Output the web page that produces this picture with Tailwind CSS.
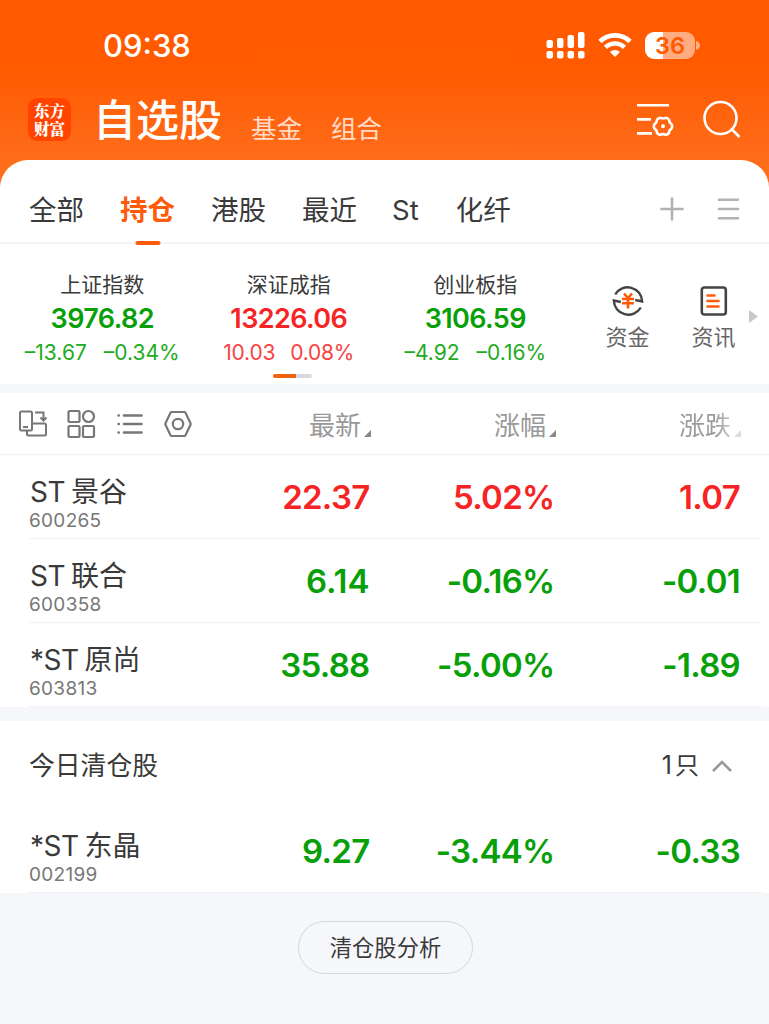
<!DOCTYPE html>
<html lang="zh-CN">

<head>
  <meta charset="utf-8">
  <title>自选股</title>
  <script src="https://cdn.jsdelivr.net/npm/@tailwindcss/browser@4"></script>
</head>

<body class="w-[769px] h-[1024px] overflow-hidden bg-[#f6f7fa] font-['Inter','Noto_Sans_CJK_SC',sans-serif] text-[#3a3a3a]">
  <div class="bg-linear-to-b from-[#ff5a00] from-35% to-[#ff6e1a] to-90% h-[190px]">
    <!-- status bar -->
    <div class="h-[90px] flex items-center justify-between pl-[103px] pr-[69px] text-white">
      <span class="text-[31px] font-medium leading-none">09:38</span>
      <div class="flex items-center">
        <svg class="w-[40px] h-[28px]" viewBox="0 0 40 28" fill="white">
          <rect x="0.5" y="9" width="6.5" height="8" rx="2" />
          <rect x="11" y="7" width="6.5" height="10" rx="2" />
          <rect x="21.500" y="4" width="6.5" height="13" rx="2" />
          <rect x="32" y="1" width="6.5" height="16" rx="2" />
          <rect x="0.5" y="20" width="6.5" height="7.500" rx="2" />
          <rect x="11" y="20" width="6.5" height="7.500" rx="2" />
          <rect x="21.500" y="20" width="6.5" height="7.500" rx="2" />
          <rect x="32" y="20" width="6.5" height="7.500" rx="2" />
        </svg>
        <svg class="w-[34px] h-[24px] ml-[12px]" viewBox="0 0 34 24" fill="none" stroke="white" stroke-width="4.600">
          <path d="M2 8.500a21.500 21.500 0 0 1 30 0" />
          <path d="M7.500 14.300a13.600 13.600 0 0 1 19 0" />
          <path d="M17 24l-5-5a7.200 7.200 0 0 1 10 0z" fill="white" stroke="none" />
        </svg>
        <div class="ml-[13px] w-[50px] h-[27px] rounded-[9px] flex items-center justify-center bg-linear-to-r from-white from-36% to-[#ffac80] to-36% text-[#ff5a00] text-[23.500px] font-semibold leading-none pt-px">36</div>
        <svg class="w-[4px] h-[9px] ml-[1px]" viewBox="0 0 4 9"><path d="M0 0q4 1 4 4.500T0 9z" fill="#ffac80" /></svg>
      </div>
    </div>
    <!-- title bar -->
    <div class="h-[70px] flex pl-[28px] pr-[28px] text-white">
      <div class="mt-[8px] w-[43px] h-[43px] rounded-[9px] bg-[#ff4400] font-['Noto_Serif_CJK_SC','Noto_Sans_CJK_SC',serif] font-black text-[15.500px] leading-[18px] text-center pt-[3px]">东方<br>财富</div>
      <h1 class="ml-[22px] mt-[2px] text-[43px] leading-[56px] font-medium">自选股</h1>
      <span class="ml-[29px] mt-[21px] text-[25.500px] leading-[36px] text-[#ffdcc9]">基金</span>
      <span class="ml-[29px] mt-[21px] text-[25.500px] leading-[36px] text-[#ffdcc9]">组合</span>
      <svg class="ml-auto mt-[12px] w-[38px] h-[34px]" viewBox="0 0 38 34" fill="none" stroke="white" stroke-width="2.600">
        <path d="M1 3.300h32M1 17.400h14M1 31.400h15" />
        <path transform="translate(27 24.300)" d="M8.600-2Q9.800 0 8.600 2Q6.200 3.600 6.030 6.450Q4.900 8.490 2.570 8.450Q0 7.200-2.570 8.450Q-4.900 8.490-6.030 6.450Q-6.200 3.600-8.600 2Q-9.800 0-8.600-2Q-6.200-3.600-6.030-6.450Q-4.900-8.490-2.570-8.450Q0-7.200 2.570-8.450Q4.900-8.490 6.030-6.450Q6.200-3.600 8.600-2Z" />
        <circle cx="27" cy="24.300" r="2" fill="white" stroke="none" />
      </svg>
      <svg class="ml-[29px] mt-[10px] w-[38px] h-[38px]" viewBox="0 0 38 38" fill="none" stroke="white" stroke-width="2.600">
        <circle cx="17.500" cy="18" r="16" />
        <path d="M28.500 29l8 8" />
      </svg>
    </div>
  </div>

  <div class="relative -mt-[30px] bg-white rounded-t-[28px]">
    <!-- group tabs -->
    <nav class="h-[84px] border-b-2 border-[#f4f4f5] flex text-[27.500px] leading-[40px] pt-[30px] pl-[29px] pr-[29px]">
      <a>全部</a>
      <a class="ml-[36px] font-bold text-[#ff5a0a] relative">持仓
        <span class="absolute left-1/2 -translate-x-1/2 top-[51px] w-[25px] h-[4px] rounded-full bg-[#ff5a0a]"></span>
      </a>
      <a class="ml-[36px]">港股</a>
      <a class="ml-[36px]">最近</a>
      <a class="ml-[35px]">St</a>
      <a class="ml-[37px]">化纤</a>
      <svg class="ml-auto mt-[7px] w-[24px] h-[24px]" viewBox="0 0 24 24" stroke="#b2b2b2" stroke-width="2.600" stroke-linecap="round">
        <path d="M12 1.500v21M1.500 12h21" />
      </svg>
      <svg class="ml-[33px] mt-[7px] w-[23px] h-[24px]" viewBox="0 0 23 24" stroke="#b2b2b2" stroke-width="2.600" stroke-linecap="round">
        <path d="M2 2.700h19M2 12h19M2 21.300h19" />
      </svg>
    </nav>

    <!-- market indices -->
    <div class="relative h-[140px] flex pl-[9px] text-center">
      <div class="w-[186.500px] pt-[27px]">
        <p class="text-[21px] leading-[28px]">上证指数</p>
        <p class="text-[27px] leading-[40px] font-semibold text-[#08a008] tracking-[-0.600px]">3976.82</p>
        <p class="text-[21px] leading-[28px] text-[#22ab22]"><span>–13.67</span><span class="ml-[17px]">–0.34%</span></p>
      </div>
      <div class="w-[186.500px] pt-[27px]">
        <p class="text-[21px] leading-[28px]">深证成指</p>
        <p class="text-[27px] leading-[40px] font-semibold text-[#f62424] tracking-[-0.600px]">13226.06</p>
        <p class="text-[21px] leading-[28px] text-[#f84343] tracking-[-0.200px]"><span>10.03</span><span class="ml-[15px]">0.08%</span></p>
      </div>
      <div class="w-[186.500px] pt-[27px]">
        <p class="text-[21px] leading-[28px]">创业板指</p>
        <p class="text-[27px] leading-[40px] font-semibold text-[#08a008] tracking-[-0.600px]">3106.59</p>
        <p class="text-[21px] leading-[28px] text-[#22ab22]"><span>–4.92</span><span class="ml-[17px]">–0.16%</span></p>
      </div>
      <div class="ml-[16px] w-[86px] pt-[40px] flex flex-col items-center">
        <svg class="w-[34px] h-[34px]" viewBox="0 0 34 34" fill="none" stroke="#444" stroke-width="2.400">
          <path d="M4.200 10.500A14.500 14.500 0 0 1 31.200 17.500l-7-1.500" />
          <path d="M29.800 23.500A14.500 14.500 0 0 1 2.800 16.500l7 1.500" />
          <path stroke="#ff5a0a" stroke-width="2.600" d="M13 9.500l4 4.500 4-4.500M11 15h12M11 19.300h12M17 14v10.500" />
        </svg>
        <span class="mt-[3px] text-[22px] leading-[32px] text-[#666]">资金</span>
      </div>
      <div class="w-[86px] pt-[40px] flex flex-col items-center">
        <svg class="w-[34px] h-[34px]" viewBox="0 0 34 34" fill="none" stroke="#444" stroke-width="2.600">
          <rect x="4.800" y="3.500" width="24" height="27" rx="2.500" />
          <path stroke="#ff5a0a" stroke-linecap="round" d="M10.500 11.500h7M10.500 17h11M10.500 22.500h11" />
        </svg>
        <span class="mt-[3px] text-[22px] leading-[32px] text-[#666]">资讯</span>
      </div>
      <svg class="absolute left-[749px] top-[66px] w-[10px] h-[13px]" viewBox="0 0 10 13"><path d="M0 0l9 6.500L0 13z" fill="#c8c8c8" /></svg>
      <span class="absolute left-[273px] top-[130px] w-[39px] h-[4px] rounded-full bg-linear-to-r from-[#f0640f] from-60% to-[#d5d8de] to-60%"></span>
    </div>
    <div class="h-[9px] bg-[#f6f7fa]"></div>

    <!-- list header -->
    <div class="h-[62px] border-b border-[#f2f2f4] flex items-center text-[26px] text-[#999] pl-[18px]">
      <svg class="w-[30px] h-[30px]" viewBox="0 0 30 30" fill="none" stroke="#777" stroke-width="2">
        <rect x="2" y="2.500" width="12" height="19" rx="1.500" />
        <path d="M5 18h5M17 3.500h8.500v8M22.500 8.500l3 3 3-3M14 14.500h12.500q1.500 0 1.500 1.500v9q0 1.500-1.500 1.500H10.500q-1.500 0-1.500-1.500v-3.500" />
      </svg>
      <svg class="ml-[18px] w-[30px] h-[30px]" viewBox="0 0 30 30" fill="none" stroke="#777" stroke-width="2.200">
        <rect x="2.500" y="2" width="11" height="11" rx="1" />
        <circle cx="22.500" cy="7.500" r="5.500" />
        <rect x="2.500" y="17" width="11" height="11" rx="1" />
        <rect x="17" y="17" width="11" height="11" rx="1" />
      </svg>
      <svg class="ml-[19px] w-[30px] h-[30px]" viewBox="0 0 30 30" fill="none" stroke="#777" stroke-width="2.600" stroke-linecap="round">
        <path d="M9 6.500h17.500M9 15h17.500M9 23.500h17.500M3.600 6.500h.2M3.600 15h.2M3.600 23.500h.2" />
      </svg>
      <svg class="ml-[18px] w-[30px] h-[30px]" viewBox="0 0 30 30" fill="none" stroke="#777" stroke-width="2.200">
        <path stroke-linejoin="round" d="M8.500 3h13q.6 0 1 .8l5 10.400q.4.800 0 1.600l-5 10.400q-.4.800-1 .8h-13q-.6 0-1-.8l-5-10.400q-.4-.8 0-1.600l5-10.400q.4-.8 1-.8z" />
        <circle cx="15" cy="15" r="5.200" />
      </svg>
      <div class="ml-[116px] pt-[4px] w-[62px] flex items-end justify-between leading-[38px]">最新<svg class="w-[7px] h-[7px] mb-[8px]" viewBox="0 0 7 7"><path d="M7 0v7H0z" fill="#888" /></svg></div>
      <div class="ml-[123px] pt-[4px] w-[62px] flex items-end justify-between leading-[38px]">涨幅<svg class="w-[7px] h-[7px] mb-[8px]" viewBox="0 0 7 7"><path d="M7 0v7H0z" fill="#888" /></svg></div>
      <div class="ml-[123px] pt-[4px] w-[62px] flex items-end justify-between leading-[38px]"><span class="bg-linear-to-r from-[#999] from-70% to-[#ccc] bg-clip-text text-transparent">涨跌</span><svg class="w-[7px] h-[7px] mb-[8px]" viewBox="0 0 7 7"><path d="M7 0v7H0z" fill="#ddd" /></svg></div>
    </div>

    <!-- holdings -->
    <div class="ml-[29px] mr-[7px] h-[84px] border-b border-[#f2f2f4] grid grid-cols-[155px_185.500px_185px_185.500px] text-right text-[33px] font-semibold tracking-[-0.700px] text-[#f62424]">
      <div class="pt-[18px] text-left font-normal tracking-normal text-[#3a3a3a]">
        <p class="pl-px text-[28px] leading-[39px] whitespace-nowrap"><span class="tracking-[-0.500px]">ST</span><span class="ml-[6px]">景谷</span></p>
        <p class="text-[19px] leading-[18px] text-[#777] tracking-[0.300px]">600265</p>
      </div>
      <span class="leading-[85px]">22.37</span><span class="leading-[85px]">5.02%</span><span class="leading-[85px]">1.07</span>
    </div>
    <div class="ml-[29px] mr-[7px] h-[84px] border-b border-[#f2f2f4] grid grid-cols-[155px_185.500px_185px_185.500px] text-right text-[33px] font-semibold tracking-[-0.700px] text-[#08a008]">
      <div class="pt-[18px] text-left font-normal tracking-normal text-[#3a3a3a]">
        <p class="pl-px text-[28px] leading-[39px] whitespace-nowrap"><span class="tracking-[-0.500px]">ST</span><span class="ml-[6px]">联合</span></p>
        <p class="text-[19px] leading-[18px] text-[#777] tracking-[0.300px]">600358</p>
      </div>
      <span class="leading-[85px] tracking-normal">6.14</span><span class="leading-[85px]">-0.16%</span><span class="leading-[85px]">-0.01</span>
    </div>
    <div class="ml-[29px] mr-[7px] h-[84px] border-b border-[#f2f2f4] grid grid-cols-[155px_185.500px_185px_185.500px] text-right text-[33px] font-semibold tracking-[-0.700px] text-[#08a008]">
      <div class="pt-[18px] text-left font-normal tracking-normal text-[#3a3a3a]">
        <p class="pl-px text-[28px] leading-[39px] whitespace-nowrap"><span class="tracking-[-0.500px]">*ST</span><span class="ml-[6px]">原尚</span></p>
        <p class="text-[19px] leading-[18px] text-[#777] tracking-[0.300px]">603813</p>
      </div>
      <span class="leading-[85px]">35.88</span><span class="leading-[85px]">-5.00%</span><span class="leading-[85px]">-1.89</span>
    </div>
    <div class="h-[14px] bg-[#f6f7fa]"></div>

    <!-- closed today -->
    <div class="h-[88px] flex items-center pl-[29px] pr-[37px] pt-[2px] text-[25.800px]">
      <h2>今日清仓股</h2>
      <span class="ml-auto text-[25px]">1<span class="ml-[3px] text-[24px]">只</span></span>
      <svg class="ml-[13px] w-[20px] h-[12px]" viewBox="0 0 20 12" fill="none" stroke="#999" stroke-width="2.600"><path d="M1 11l9-9 9 9" /></svg>
    </div>
    <div class="ml-[29px] mr-[7px] h-[84px] border-b border-[#f2f2f4] grid grid-cols-[155px_185.500px_185px_185.500px] text-right text-[33px] font-semibold tracking-[-0.700px] text-[#08a008]">
      <div class="pt-[18px] text-left font-normal tracking-normal text-[#3a3a3a]">
        <p class="pl-px text-[28px] leading-[39px] whitespace-nowrap"><span class="tracking-[-0.500px]">*ST</span><span class="ml-[6px]">东晶</span></p>
        <p class="text-[19px] leading-[18px] text-[#777] tracking-[0.300px]">002199</p>
      </div>
      <span class="leading-[85px]">9.27</span><span class="leading-[85px]">-3.44%</span><span class="leading-[85px]">-0.33</span>
    </div>
  </div>

  <button class="mt-[28px] ml-[298px] w-[175px] h-[53px] pt-[2px] rounded-full border border-[#d4d5d8] text-[22.300px] leading-none">清仓股分析</button>
</body>

</html>
